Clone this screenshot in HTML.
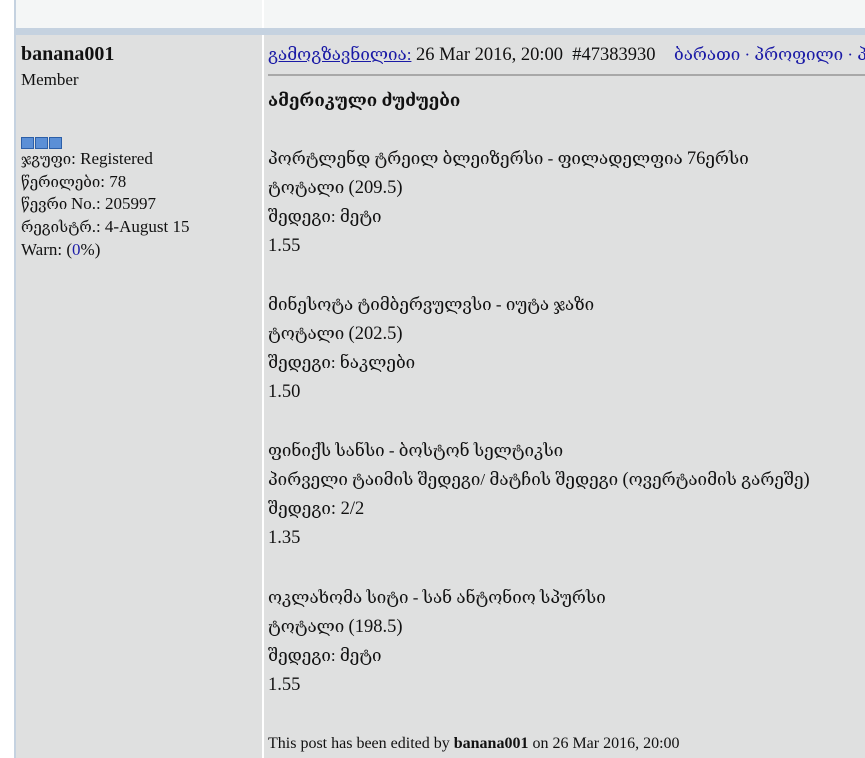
<!DOCTYPE html>
<html><head><meta charset="utf-8"><style>
body{margin:0;width:865px;height:758px;overflow:hidden;background:#fff;font-family:"Liberation Serif","DejaVu Serif",serif;color:#111;position:relative}
.a{position:absolute;white-space:nowrap}
.l{font-size:15px;line-height:20px}
.l i{font-style:normal;font-size:17px}
.r{font-size:17px;left:268px;line-height:22px}
.r i{font-style:normal;font-size:18.5px}
a{color:#1a1aa6}
</style></head><body>
<div class="a" style="left:14px;top:0;width:2px;height:758px;background:#c5d2e0"></div>
<div class="a" style="left:16px;top:0;width:849px;height:28px;background:#f4f6f6"></div>
<div class="a" style="left:262px;top:0;width:2px;height:28px;background:#fff"></div>
<div class="a" style="left:16px;top:28px;width:849px;height:7px;background:#c5d2e0"></div>
<div class="a" style="left:16px;top:35px;width:849px;height:723px;background:#dfe0e0"></div>
<div class="a" style="left:262px;top:35px;width:2px;height:723px;background:#fff"></div>
<div class="a" style="left:268px;top:74px;width:597px;height:2px;background:#a8a8a8"></div>

<div class="a" style="left:21px;top:43px;font-size:20px;font-weight:bold">banana001</div>
<div class="a l" style="left:21px;top:70px"><i>Member</i></div>
<div class="a" style="left:21px;top:136px">
<span style="display:inline-block;width:13px;height:12px;background:#5b8fd6;border:1px solid #2c5fa8;box-sizing:border-box;margin-right:1px"></span><span style="display:inline-block;width:13px;height:12px;background:#5b8fd6;border:1px solid #2c5fa8;box-sizing:border-box;margin-right:1px"></span><span style="display:inline-block;width:13px;height:12px;background:#5b8fd6;border:1px solid #2c5fa8;box-sizing:border-box"></span></div>
<div class="a l" style="left:21px;top:149px">ჯგუფი<i>: Registered</i></div>
<div class="a l" style="left:21px;top:172px">წერილები<i>: 78</i></div>
<div class="a l" style="left:21px;top:194px">წევრი <i>No.: 205997</i></div>
<div class="a l" style="left:21px;top:217px">რეგისტრ<i>.: 4-August 15</i></div>
<div class="a l" style="left:21px;top:240px"><i>Warn: (<span style="color:#1a1aa6">0</span>%)</i></div>

<div class="a r" style="top:44px"><a href="#">გამოგზავნილია:</a><i> 26 Mar 2016, 20:00 &nbsp;#47383930 &nbsp;&nbsp;&nbsp;</i><span style="color:#1a1aa6">ბარათი · პროფილი · პ</span></div>
<div class="a r" style="top:90px;font-weight:bold">ამერიკული ძუძუები</div>
<div class="a r" style="top:148px">პორტლენდ ტრეილ ბლეიზერსი - ფილადელფია <i>76</i>ერსი</div>
<div class="a r" style="top:177px">ტოტალი <i>(209.5)</i></div>
<div class="a r" style="top:206px">შედეგი: მეტი</div>
<div class="a r" style="top:235px"><i>1.55</i></div>
<div class="a r" style="top:294px">მინესოტა ტიმბერვულვსი - იუტა ჯაზი</div>
<div class="a r" style="top:323px">ტოტალი <i>(202.5)</i></div>
<div class="a r" style="top:352px">შედეგი: ნაკლები</div>
<div class="a r" style="top:381px"><i>1.50</i></div>
<div class="a r" style="top:440px">ფინიქს სანსი - ბოსტონ სელტიკსი</div>
<div class="a r" style="top:469px">პირველი ტაიმის შედეგი/ მატჩის შედეგი <i>(</i>ოვერტაიმის გარეშე<i>)</i></div>
<div class="a r" style="top:498px">შედეგი<i>: 2/2</i></div>
<div class="a r" style="top:527px"><i>1.35</i></div>
<div class="a r" style="top:587px">ოკლახომა სიტი - სან ანტონიო სპურსი</div>
<div class="a r" style="top:616px">ტოტალი <i>(198.5)</i></div>
<div class="a r" style="top:645px">შედეგი: მეტი</div>
<div class="a r" style="top:674px"><i>1.55</i></div>
<div class="a" style="left:268px;top:735px;font-size:16px">This post has been edited by <b>banana001</b> on 26 Mar 2016, 20:00</div>
</body></html>
